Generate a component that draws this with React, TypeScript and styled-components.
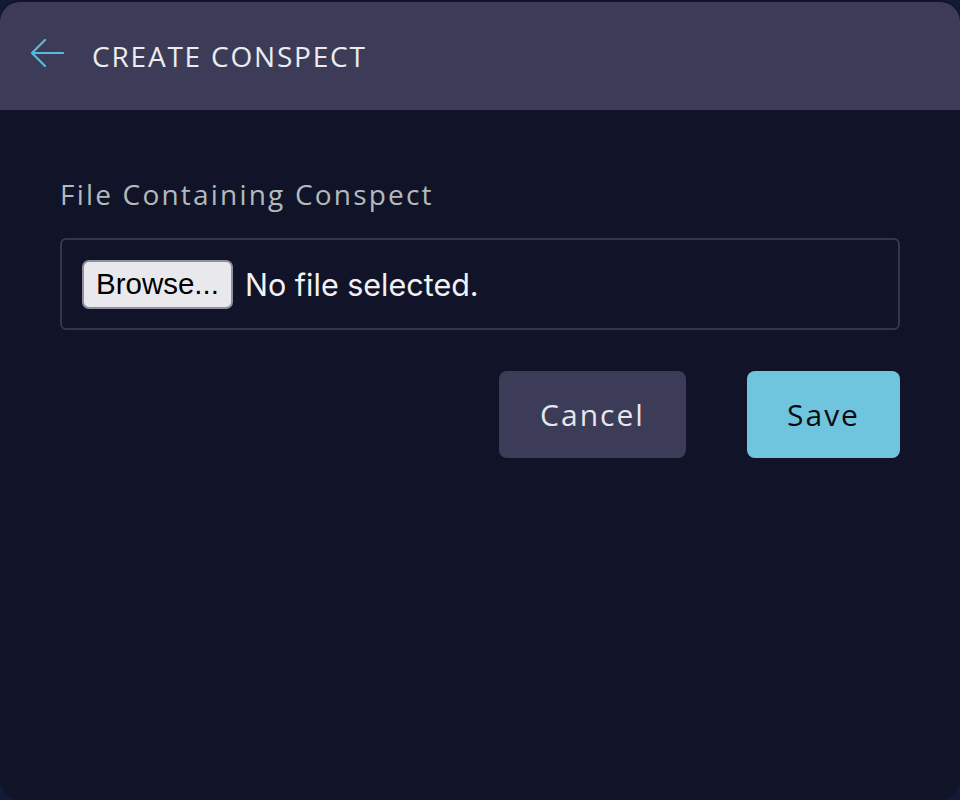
import React from "react";
import styled, { createGlobalStyle } from "styled-components";

const GlobalStyle = createGlobalStyle`
  html, body {
    margin: 0;
    padding: 0;
    background: #131a36;
  }
  #root {
    min-height: 100vh;
  }
`;

const Card = styled.div`
  display: flex;
  flex-direction: column;
  min-height: 800px;
  background: #111428;
  border-radius: 20px;
  overflow: hidden;
  font-family: "Open Sans", "Liberation Sans", sans-serif;
`;

const Header = styled.header`
  display: flex;
  align-items: center;
  gap: 28px;
  height: 108px;
  padding: 0 30px;
  margin-top: 2px;
  background: #3c3c58;
  border-radius: 20px 20px 0 0;
`;

const BackButton = styled.button`
  display: flex;
  align-items: center;
  padding: 0;
  margin-top: -6px;
  border: none;
  background: none;
  cursor: pointer;
`;

const Title = styled.h1`
  margin: 0;
  font-size: 28px;
  font-weight: 500;
  color: #ececf0;
  letter-spacing: 1.8px;
`;

const Body = styled.main`
  display: flex;
  flex-direction: column;
  padding: 65px 60px 0;
`;

const Label = styled.label`
  font-size: 28px;
  color: #b3babe;
  letter-spacing: 2.2px;
  margin-bottom: 25px;
`;

const FileBox = styled.div`
  display: flex;
  align-items: center;
  gap: 12px;
  height: 88px;
  padding: 0 20px;
  border: 2px solid #34364e;
  border-radius: 6px;
`;

const BrowseButton = styled.span`
  display: flex;
  align-items: center;
  height: 45px;
  padding: 0 12px;
  background: #e9e9ed;
  border: 2px solid #8f8f9d;
  border-radius: 7px;
  font-family: "Liberation Sans", Arial, sans-serif;
  font-size: 29.5px;
  color: #000;
`;

const FileStatus = styled.span`
  font-family: Inter, "Liberation Sans", sans-serif;
  font-size: 30.5px;
  color: #f1f1f4;
`;

const HiddenInput = styled.input`
  display: none;
`;

const Actions = styled.div`
  display: flex;
  justify-content: flex-end;
  gap: 61px;
  margin-top: 41px;
`;

const ActionButton = styled.button<{ $primary?: boolean }>`
  height: 87px;
  width: ${({ $primary }) => ($primary ? "153px" : "187px")};
  border: none;
  border-radius: 8px;
  background: ${({ $primary }) => ($primary ? "#70c5de" : "#3c3c58")};
  color: ${({ $primary }) => ($primary ? "#0b0b10" : "#e6e6ec")};
  font-family: inherit;
  font-size: 30px;
  letter-spacing: 2px;
  cursor: pointer;
`;

export default function App() {
  return (
    <>
      <GlobalStyle />
      <Card>
        <Header>
          <BackButton aria-label="back">
            <svg width="34" height="28" viewBox="0 0 34 28" fill="none">
              <path
                d="M2 14H33M15 1L2 14L15 27"
                stroke="#5bbad6"
                strokeWidth="2.2"
                strokeLinecap="round"
                strokeLinejoin="round"
              />
            </svg>
          </BackButton>
          <Title>CREATE CONSPECT</Title>
        </Header>
        <Body>
          <Label htmlFor="conspect-file">File Containing Conspect</Label>
          <FileBox as="label" htmlFor="conspect-file">
            <BrowseButton>Browse...</BrowseButton>
            <FileStatus>No file selected.</FileStatus>
            <HiddenInput id="conspect-file" type="file" />
          </FileBox>
          <Actions>
            <ActionButton>Cancel</ActionButton>
            <ActionButton $primary>Save</ActionButton>
          </Actions>
        </Body>
      </Card>
    </>
  );
}
